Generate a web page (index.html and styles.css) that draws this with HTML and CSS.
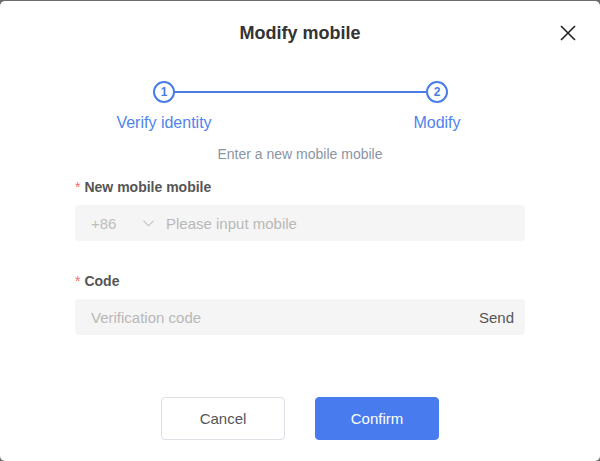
FILE: index.html
```html
<!DOCTYPE html>
<html lang="en">
<head>
<meta charset="utf-8">
<title>Modify mobile</title>
<link rel="stylesheet" href="styles.css">
</head>
<body>
<div class="dialog">
  <div class="dialog-header">
    <h2 class="dialog-title">Modify mobile</h2>
    <button class="dialog-close" type="button" aria-label="Close">
      <svg width="16" height="16" viewBox="0 0 16 16"><path d="M1 1L15 15M15 1L1 15" stroke="#222" stroke-width="1.6" fill="none"/></svg>
    </button>
  </div>

  <div class="stepper">
    <div class="stepper-track">
      <span class="step-dot">1</span>
      <span class="step-line"></span>
      <span class="step-dot">2</span>
    </div>
    <div class="stepper-labels">
      <span class="step-label">Verify identity</span>
      <span class="step-label">Modify</span>
    </div>
  </div>

  <p class="hint">Enter a new mobile mobile</p>

  <form class="form">
    <label class="field-label"><span class="req">*</span>New mobile mobile</label>
    <div class="input-box">
      <span class="prefix">+86</span>
      <svg class="chevron" width="11" height="7" viewBox="0 0 11 7"><path d="M0.5 0.8L5.5 5.8L10.5 0.8" stroke="#c0c0c0" stroke-width="1.1" fill="none"/></svg>
      <input class="input" type="text" placeholder="Please input mobile">
    </div>

    <label class="field-label second"><span class="req">*</span>Code</label>
    <div class="input-box">
      <input class="input" type="text" placeholder="Verification code">
      <span class="send">Send</span>
    </div>
  </form>

  <div class="actions">
    <button class="btn btn-cancel" type="button">Cancel</button>
    <button class="btn btn-primary" type="button">Confirm</button>
  </div>
</div>
</body>
</html>
```

FILE: styles.css
```css
html, body {
  margin: 0;
  padding: 0;
  height: 100%;
}

body {
  background: #6b6b6b;
  font-family: "Liberation Sans", Arial, sans-serif;
  overflow: hidden;
}

.dialog {
  margin-top: 1px;
  height: 460px;
  background: #fff;
  border-radius: 5px;
  display: flex;
  flex-direction: column;
}

.dialog-header {
  position: relative;
  height: 64px;
  display: flex;
  align-items: center;
  justify-content: center;
}

.dialog-title {
  margin: 0;
  font-size: 18px;
  font-weight: bold;
  color: #333;
}

.dialog-close {
  position: absolute;
  right: 24px;
  top: 24px;
  padding: 0;
  border: 0;
  background: none;
  width: 16px;
  height: 16px;
  display: flex;
}

/* stepper */
.stepper {
  width: 393px;
  margin: 16px 0 0 104px;
}

.stepper-track {
  display: flex;
  align-items: center;
  padding: 0 49px;
}

.step-dot {
  box-sizing: border-box;
  width: 22px;
  height: 22px;
  border: 2px solid #4a7de6;
  border-radius: 50%;
  color: #4a7de6;
  font-size: 12px;
  font-weight: bold;
  display: flex;
  align-items: center;
  justify-content: center;
  background: #fff;
}

.step-line {
  flex: 1;
  height: 2px;
  background: #4a7de6;
}

.stepper-labels {
  display: flex;
  justify-content: space-between;
  margin-top: 10px;
}

.step-label {
  width: 120px;
  text-align: center;
  font-size: 16px;
  line-height: 20px;
  color: #4f84ea;
}

.hint {
  margin: 12px 0 0;
  text-align: center;
  font-size: 14px;
  line-height: 18px;
  color: #8a94a4;
}

/* form */
.form {
  padding: 0 75px;
  margin-top: 15px;
  display: flex;
  flex-direction: column;
}

.field-label {
  font-size: 14px;
  font-weight: bold;
  line-height: 18px;
  color: #555;
  margin-bottom: 9px;
}

.field-label.second {
  margin-top: 31px;
}

.req {
  color: #f56c6c;
  font-weight: normal;
  margin-right: 4px;
}

.input-box {
  height: 36px;
  background: #f5f5f5;
  border-radius: 4px;
  display: flex;
  align-items: center;
  padding: 0 11px 0 16px;
  font-size: 15px;
}

.prefix {
  color: #bdbdbd;
  width: 52px;
}

.chevron {
  margin-right: 12px;
}

.input {
  flex: 1;
  min-width: 0;
  border: 0;
  background: transparent;
  outline: none;
  padding: 0;
  font: inherit;
  color: #333;
}

.input::placeholder {
  color: #b8b8b8;
}

.send {
  color: #555;
}

/* footer buttons */
.actions {
  margin-top: auto;
  margin-bottom: 21px;
  display: flex;
  justify-content: center;
  gap: 30px;
}

.btn {
  width: 124px;
  height: 43px;
  border-radius: 4px;
  font-family: "Liberation Sans", Arial, sans-serif;
  font-size: 15px;
  cursor: pointer;
}

.btn-cancel {
  background: #fff;
  border: 1px solid #dcdfe6;
  color: #555;
}

.btn-primary {
  background: #487cee;
  border: 1px solid #487cee;
  color: #fff;
}
```
